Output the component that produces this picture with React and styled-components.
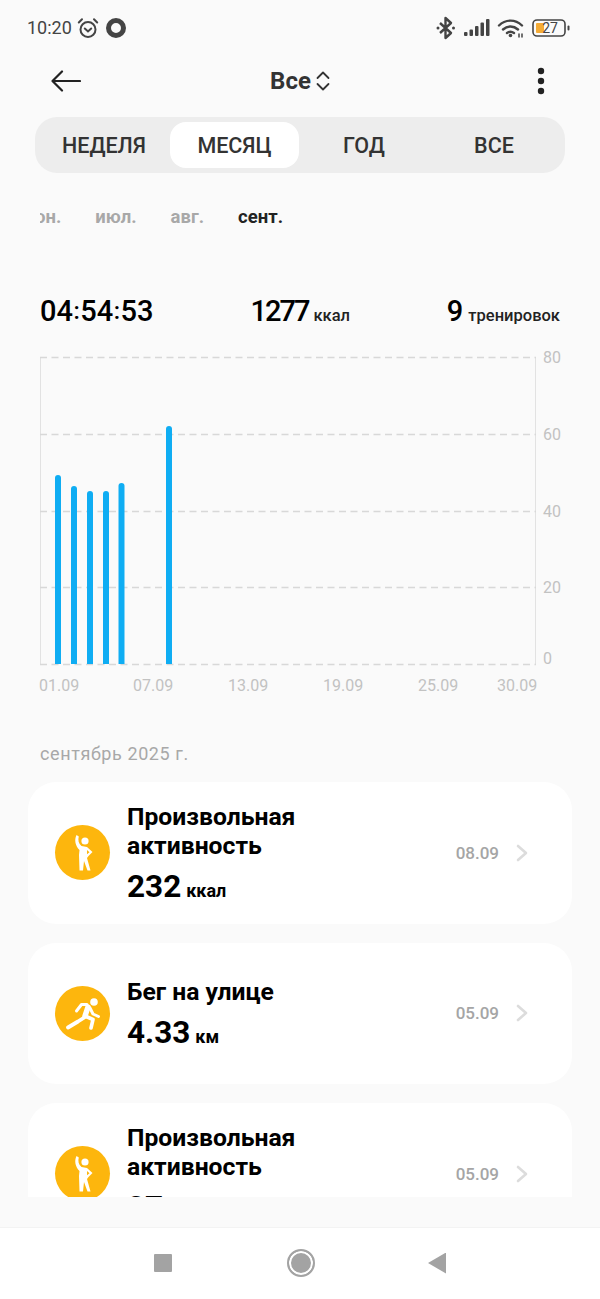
import React from 'react'
import styled, { createGlobalStyle } from 'styled-components'

const Global = createGlobalStyle`
html,body{
  margin:0;
  padding:0;
  background:#fafafa;
}
*{box-sizing:border-box;}
`
const Page = styled.div`
width:600px;
height:1299px;
overflow:hidden;
display:flex;
flex-direction:column;
background:#fafafa;
font-family:Roboto,"Noto Sans",sans-serif;
color:#000;
`
const StatusBar = styled.div`
height:56px;
flex:none;
display:flex;
align-items:center;
justify-content:space-between;
padding:0 30px 0 27px;
color:#444;
`
const StatusGroup = styled.div`
display:flex;
align-items:center;
gap:${p => p.$gap || 5}px;
`
const Time = styled.span`
font-size:18px;
margin-bottom:2px;
`
const Header = styled.div`
height:50px;
flex:none;
display:flex;
align-items:center;
justify-content:space-between;
padding:0 55px 0 51px;
`
const Title = styled.div`
display:flex;
align-items:center;
gap:5px;
font-size:24px;
font-weight:700;
color:#333;
margin-right:18px;
`
const Tabs = styled.div`
flex:none;
height:56px;
margin:11px 35px 0;
padding:5px 6px 5px 4px;
display:grid;
grid-template-columns:repeat(4,130px);
background:#ededed;
border-radius:22px;
`
const Tab = styled.div`
display:flex;
align-items:center;
justify-content:center;
margin-left:${p => p.$active ? 1 : 0}px;
padding-top:1px;
font-size:21.500px;
font-weight:500;
color:#333;
background:${p => p.$active ? '#fff' : 'transparent'};
border-radius:16px;
`
const Months = styled.div`
flex:none;
width:243px;
height:24px;
margin:32px 0 0 40px;
display:flex;
align-items:center;
justify-content:flex-end;
gap:34px;
overflow:hidden;
`
const Month = styled.span`
flex:none;
font-size:18.500px;
font-weight:700;
color:${p => p.$active ? '#222' : '#a8a8a8'};
`
const Stats = styled.div`
flex:none;
display:flex;
align-items:baseline;
justify-content:space-between;
height:36px;
margin:65px 40px 0;
`
const StatValue = styled.span`
font-size:29px;
font-weight:500;
letter-spacing:${p => p.$tight ? '-2px' : '0'};
`
const Colon = styled.span`
font-size:24px;
vertical-align:2px;
margin:0 0.500px;
`
const StatUnit = styled.span`
font-size:16.500px;
font-weight:500;
margin-left:5px;
color:#222;
`
const Chart = styled.svg`
display:block;
flex:none;
margin-top:16px;
`
const ChartText = styled.text`
font-family:Roboto,sans-serif;
font-size:16px;
fill:#c2c2c2;
`
const Section = styled.div`
flex:none;
height:24px;
margin:36px 40px 0;
font-size:18px;
line-height:24px;
letter-spacing:0.600px;
color:#a8a8a8;
`
const List = styled.div`
flex:none;
height:415px;
margin-top:16px;
padding:0 28px;
overflow:hidden;
display:flex;
flex-direction:column;
gap:19px;
`
const Card = styled.div`
flex:none;
height:141.500px;
display:flex;
align-items:center;
padding:0 44px 0 27px;
background:#fff;
border-radius:28px;
`
const Badge = styled.div`
flex:none;
width:55px;
height:55px;
border-radius:50%;
background:#fdb60d;
display:flex;
align-items:center;
justify-content:center;
`
const Body = styled.div`
flex:1;
margin-left:17px;
padding-top:6px;
`
const Name = styled.div`
font-size:24.700px;
line-height:29px;
font-weight:700;
width:200px;
`
const Amount = styled.div`
margin-top:8px;
font-size:31.500px;
line-height:38px;
font-weight:700;
`
const AmountUnit = styled.span`
font-size:18px;
font-weight:700;
margin-left:5px;
`
const DateLabel = styled.span`
font-size:17px;
font-weight:500;
color:#a5a5a5;
margin-right:17px;
`
const Footer = styled.div`
flex:1;
margin-top:30px;
background:#fff;
border-top:1px solid #f3f3f3;
display:flex;
align-items:center;
justify-content:center;
gap:115px;
padding-bottom:1px;
`
const NavSquare = styled.div`
width:18px;
height:18px;
background:#a3a3a3;
border-radius:1px;
`
const NavCircle = styled.div`
width:28px;
height:28px;
border-radius:50%;
border:2px solid #a3a3a3;
background:#a3a3a3;
box-shadow:inset 0 0 0 2px #fff;
`
const NavBack = styled.div`
width:18px;
height:21px;
margin-left:-2px;
background:#a3a3a3;
clip-path:polygon(100% 0,100% 100%,0 50%);
`

const AlarmIcon = () => (
  <svg width="22" height="22" viewBox="0 0 22 22" fill="none" stroke="#444" strokeWidth="2" strokeLinecap="round">
    <circle cx="11" cy="12.500" r="7.500" />
    <path d="M7.800 11.500 11 14.500l3.200-3M1.800 5.500 5 2.200M20.200 5.500 17 2.200" />
  </svg>
)
const RingIcon = () => (
  <svg width="24" height="22" viewBox="0 0 24 22" fill="none">
    <circle cx="12" cy="11" r="7.500" stroke="#444" strokeWidth="5" />
  </svg>
)
const BluetoothIcon = () => (
  <svg width="22" height="24" viewBox="0 0 22 24" fill="none" stroke="#444" strokeWidth="2.400" strokeLinejoin="round">
    <path d="M5 7l11 10-5.500 5V2l5.500 5L5 17" />
    <circle cx="3" cy="12" r="1.500" fill="#444" stroke="none" />
    <circle cx="18.500" cy="12" r="1.500" fill="#444" stroke="none" />
  </svg>
)
const SignalIcon = () => (
  <svg width="26" height="18" viewBox="0 0 26 18" fill="#444">
    <rect x="0" y="13" width="3.500" height="4" rx="1" />
    <rect x="5.500" y="10.500" width="3.500" height="6.500" rx="1" />
    <rect x="11" y="7" width="3.500" height="10" rx="1" />
    <rect x="16.500" y="3.500" width="3.500" height="13.500" rx="1" />
    <rect x="22" y="0" width="3.500" height="17" rx="1" />
  </svg>
)
const WifiIcon = () => (
  <svg width="28" height="20" viewBox="0 0 28 20" fill="none" stroke="#444" strokeWidth="2.400" strokeLinecap="round">
    <path d="M2 7.500C8.500 1 18.500 1 25 7.500M6 11.500c4.500-4 10.500-4 15 0M10 15c2-1.500 5-1.500 7 0" />
    <circle cx="13.500" cy="17.500" r="1.800" fill="#444" stroke="none" />
    <path d="M22 16v3M25 16v3" strokeWidth="1.500" />
  </svg>
)
const BatteryIcon = () => (
  <svg width="38" height="18" viewBox="0 0 38 18">
    <rect x="1" y="1" width="32" height="16" rx="4" fill="none" stroke="#444" strokeWidth="1.600" />
    <rect x="4" y="4" width="8" height="10" rx="1" fill="#f4ab35" />
    <text x="18" y="14" textAnchor="middle" fontFamily="Roboto,sans-serif" fontSize="14" fill="#444">27</text>
    <rect x="35.500" y="6.500" width="2" height="5" rx="1" fill="#444" />
  </svg>
)
const BackArrow = () => (
  <svg width="30" height="24" viewBox="0 0 30 24" fill="none" stroke="#222" strokeWidth="2.200" strokeLinecap="round" strokeLinejoin="round">
    <path d="M29 12H1.500M11 2.500 1.500 12l9.500 9.500" />
  </svg>
)
const UpDown = () => (
  <svg width="14" height="20" viewBox="0 0 14 20" fill="none" stroke="#333" strokeWidth="1.800" strokeLinecap="round" strokeLinejoin="round">
    <path d="M1.500 7 7 1.500 12.500 7M1.500 13 7 18.500 12.500 13" />
  </svg>
)
const Dots = () => (
  <svg width="8" height="28" viewBox="0 0 8 28" fill="#222">
    <circle cx="4" cy="4" r="3.200" />
    <circle cx="4" cy="14" r="3.200" />
    <circle cx="4" cy="24" r="3.200" />
  </svg>
)
const Chevron = () => (
  <svg width="12" height="18" viewBox="0 0 12 18" fill="none" stroke="#dcdcdc" strokeWidth="2.600" strokeLinecap="round" strokeLinejoin="round">
    <path d="M2 2l8 7-8 7" />
  </svg>
)
// person with one arm raised and a hand on the hip
const StretchIcon = () => (
  <svg width="55" height="55" viewBox="0 0 55 55">
    <circle cx="30" cy="16" r="3.600" fill="#fff" />
    <path
      fillRule="evenodd"
      fill="#fff"
      d="M21.500 10 23.800 11.500C22.800 15 23.500 18.500 26.500 21L32 22l5.500 5-4 4L32 33l3.500 12.500h-3L29 36l-1 9.500h-3.500L24 30l.5-5C20.500 21 19 15 21.500 10zM32 25l2.500 2.200L32 29.200z"
    />
  </svg>
)
const RunnerIcon = () => (
  <svg width="55" height="55" viewBox="0 0 55 55" fill="none" stroke="#fff" strokeLinecap="round" strokeLinejoin="round">
    <circle cx="39" cy="16" r="3.800" fill="#fff" stroke="none" />
    <path d="M21.500 25l5-6.500H32" strokeWidth="3" />
    <path d="M35 22l3 6 5.500 2.500" strokeWidth="3" />
    <path d="M33 21l-3 9" strokeWidth="5.500" />
    <path d="M30 30l8 3.500-2 8.500" strokeWidth="3.600" />
    <path d="M28.500 32 23 35.500l-10 6" strokeWidth="3.800" />
  </svg>
)

const ticks = [
  { y: 357, label: '80' },
  { y: 434, label: '60' },
  { y: 511, label: '40' },
  { y: 587, label: '20' },
  { y: 664, label: '0' },
]
const bars = [
  { x: 58, top: 475 },
  { x: 74, top: 486 },
  { x: 90, top: 491 },
  { x: 106, top: 491 },
  { x: 121.500, top: 483 },
  { x: 169, top: 426 },
]
const dates = [
  { x: 39, label: '01.09' },
  { x: 133, label: '07.09' },
  { x: 228, label: '13.09' },
  { x: 323, label: '19.09' },
  { x: 418, label: '25.09' },
  { x: 497, label: '30.09' },
]
const TOP = 346

const MonthChart = () => (
  <Chart width="600" height="360" viewBox={`0 ${TOP} 600 360`}>
    <path d="M40.500 357V664M535.500 357V664" stroke="#e2e2e2" strokeWidth="1" />
    {ticks.map(t => (
      <g key={t.label}>
        <line x1="40" x2="536" y1={t.y + 0.5} y2={t.y + 0.5} stroke="#d8d8d8" strokeWidth="1.300" strokeDasharray="7 4.500" />
        <ChartText x="543" y={t.y + (t.label === '0' ? 0 : 6)}>{t.label}</ChartText>
      </g>
    ))}
    {bars.map(b => (
      <path key={b.x} d={`M${b.x - 3} 664V${b.top + 3}a3 3 0 0 1 6 0V664z`} fill="#0fadf3" />
    ))}
    {dates.map(d => (
      <ChartText key={d.label} x={d.x} y="691">{d.label}</ChartText>
    ))}
  </Chart>
)

const Activity = ({ icon, name, amount, unit, date }) => (
  <Card>
    <Badge>{icon}</Badge>
    <Body>
      <Name>{name}</Name>
      <Amount>{amount}<AmountUnit>{unit}</AmountUnit></Amount>
    </Body>
    <DateLabel>{date}</DateLabel>
    <Chevron />
  </Card>
)

export default function App() {
  return (
    <Page>
      <Global />
      <StatusBar>
        <StatusGroup $gap={5}>
          <Time>10:20</Time>
          <AlarmIcon />
          <RingIcon />
        </StatusGroup>
        <StatusGroup $gap={7}>
          <BluetoothIcon />
          <SignalIcon />
          <WifiIcon />
          <BatteryIcon />
        </StatusGroup>
      </StatusBar>
      <Header>
        <BackArrow />
        <Title>Все <UpDown /></Title>
        <Dots />
      </Header>
      <Tabs>
        <Tab>НЕДЕЛЯ</Tab>
        <Tab $active>МЕСЯЦ</Tab>
        <Tab>ГОД</Tab>
        <Tab>ВСЕ</Tab>
      </Tabs>
      <Months>
        <Month>июн.</Month>
        <Month>июл.</Month>
        <Month>авг.</Month>
        <Month $active>сент.</Month>
      </Months>
      <Stats>
        <StatValue>04<Colon>:</Colon>54<Colon>:</Colon>53</StatValue>
        <span><StatValue $tight>1277</StatValue><StatUnit>ккал</StatUnit></span>
        <span><StatValue>9</StatValue><StatUnit>тренировок</StatUnit></span>
      </Stats>
      <MonthChart />
      <Section>сентябрь 2025 г.</Section>
      <List>
        <Activity icon={<StretchIcon />} name="Произвольная активность" amount="232" unit="ккал" date="08.09" />
        <Activity icon={<RunnerIcon />} name="Бег на улице" amount="4.33" unit="км" date="05.09" />
        <Activity icon={<StretchIcon />} name="Произвольная активность" amount="27" unit="ккал" date="05.09" />
      </List>
      <Footer>
        <NavSquare />
        <NavCircle />
        <NavBack />
      </Footer>
    </Page>
  )
}
